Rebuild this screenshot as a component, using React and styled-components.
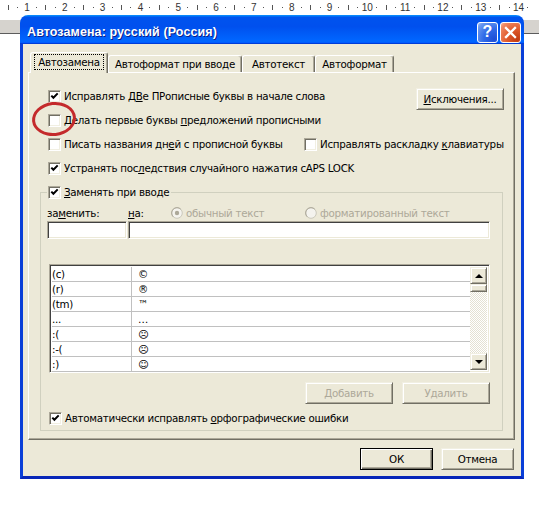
import React from 'react'
import styled, { createGlobalStyle, css } from 'styled-components'

const UI = '"DejaVu Sans", Tahoma, sans-serif'

const GlobalStyle = createGlobalStyle`
  html, body {
    margin: 0;
    padding: 0;
    background: #fff;
  }
  body {
    font-family: ${UI};
    font-size: 10.3px;
    letter-spacing: -0.28px;
    color: #000;
  }
`

const marks = []
for (let k = -2; k <= 53; k++) {
  const m = ((k % 4) + 4) % 4
  if (m === 0) marks.push({ kind: 'num', label: k / 4 + 1 })
  else if (m === 2) marks.push({ kind: 'tick' })
  else marks.push({ kind: 'dot' })
}

const rows = [
  ['(c)', '©'],
  ['(r)', '®'],
  ['(tm)', '™'],
  ['...', '…'],
  [':(', '☹'],
  [':-(', '☹'],
  [':)', '☺'],
]

const Check = ({ checked, children, width }) => (
  <CheckItem $w={width}>
    <Box>
      {checked && (
        <svg width="9" height="9" viewBox="0 0 9 9">
          <path d="M1.3 3.6 L3.4 5.8 L7.7 1.4" fill="none" stroke="#000" strokeWidth="2" />
        </svg>
      )}
    </Box>
    <span>{children}</span>
  </CheckItem>
)

const Radio = ({ on, children }) => (
  <RadioItem>
    <svg width="12" height="12" viewBox="0 0 12 12">
      <circle cx="6" cy="6" r="5.3" fill="#f4f3ee" stroke="#cac8bb" />
      <path d="M2.2 9.8 A5.3 5.3 0 0 1 9.8 2.2" fill="none" stroke="#aca899" />
      {on && <circle cx="6" cy="6" r="2.2" fill="#aca899" />}
    </svg>
    <span>{children}</span>
  </RadioItem>
)

export default function App() {
  return (
    <Page>
      <GlobalStyle />
      <Ruler>
        {marks.map((m, i) => (
          <RulerCell key={i}>
            {m.kind === 'num' ? m.label : <Mark $kind={m.kind} />}
          </RulerCell>
        ))}
      </Ruler>
      <Band />

      <Window>
        <TitleBar>
          <Title>Автозамена: русский (Россия)</Title>
          <CaptionButtons>
            <CaptionButton $kind="help">?</CaptionButton>
            <CaptionButton $kind="close">
              <svg width="13" height="13" viewBox="0 0 13 13">
                <path d="M2 2 L11 11 M11 2 L2 11" stroke="#fff" strokeWidth="2.3" strokeLinecap="square" />
              </svg>
            </CaptionButton>
          </CaptionButtons>
        </TitleBar>

        <Frame>
          <TabStrip>
            <Tab $active $w={78}>
              <FocusLabel>Автозамена</FocusLabel>
            </Tab>
            <Tab $w={134}>Автоформат при вводе</Tab>
            <Tab $w={73}>Автотекст</Tab>
            <Tab $w={79}>Автоформат</Tab>
          </TabStrip>

          <Panel>
            <Options>
              <OptionRow>
                <Check checked>
                  Исправлять Д<u>В</u>е ПРописные буквы в начале слова
                </Check>
                <Button $w={88} $top={4}>
                  <u>И</u>сключения...
                </Button>
              </OptionRow>
              <OptionRow>
                <Check>
                  Делать первые буквы <u>п</u>редложений прописными
                </Check>
                <Ellipse />
              </OptionRow>
              <OptionRow>
                <Check width={256}>
                  Писать названия дн<u>е</u>й с прописной буквы
                </Check>
                <Check>
                  Исправлять раскладку <u>к</u>лавиатуры
                </Check>
              </OptionRow>
              <OptionRow>
                <Check checked>
                  Устранять пос<u>л</u>едствия случайного нажатия cAPS LOCK
                </Check>
              </OptionRow>
            </Options>

            <Group>
              <Legend>
                <Check checked>
                  <u>З</u>аменять при вводе
                </Check>
              </Legend>
              <FieldLabels>
                <span>
                  за<u>м</u>енить:
                </span>
                <span>
                  <u>н</u>а:
                </span>
                <Radio on>обычный текст</Radio>
                <Radio>форматированный текст</Radio>
              </FieldLabels>
              <Inputs>
                <TextBox />
                <TextBox />
              </Inputs>

              <List>
                <ListBody>
                  {rows.map(([from, to]) => (
                    <ListRow key={from}>
                      <Cell>{from}</Cell>
                      <Cell $second>{to}</Cell>
                    </ListRow>
                  ))}
                </ListBody>
                <ScrollBar>
                  <ScrollButton>
                    <Arrow $dir="up" />
                  </ScrollButton>
                  <Thumb />
                  <Track />
                  <ScrollButton>
                    <Arrow $dir="down" />
                  </ScrollButton>
                </ScrollBar>
              </List>

              <ButtonRow>
                <Button $w={88} disabled>
                  Добавить
                </Button>
                <Button $w={88} disabled>
                  Удалить
                </Button>
              </ButtonRow>

              <SpellRow>
                <Check checked>
                  Автоматически исправлять <u>о</u>рфографические ошибки
                </Check>
              </SpellRow>
            </Group>
          </Panel>

          <Footer>
            <Button $w={73} $default>
              ОК
            </Button>
            <Button $w={73}>Отмена</Button>
          </Footer>
        </Frame>
      </Window>
    </Page>
  )
}

const Page = styled.div`
  position: relative;
  width: 539px;
  height: 507px;
  overflow: hidden;
  background: #fff;
`

const Ruler = styled.div`
  display: flex;
  align-items: center;
  height: 14px;
  padding-left: 3.35px;
  font-family: 'Liberation Sans', Arial, sans-serif;
  font-size: 10px;
  letter-spacing: 0;
  color: #333;
`

const RulerCell = styled.div`
  flex: none;
  width: 9.46px;
  display: flex;
  justify-content: center;
  align-items: center;
  height: 14px;
`

const Mark = styled.span`
  display: block;
  width: 1px;
  background: #555;
  height: ${(p) => (p.$kind === 'tick' ? '5px' : '1px')};
`

const Band = styled.div`
  margin-top: 6px;
  height: 13px;
  background: #d6d3ce;
  border-bottom: 1px solid #5c5c5c;
`

const Window = styled.div`
  position: absolute;
  left: 20px;
  top: 15px;
  width: 504px;
`

const TitleBar = styled.div`
  box-sizing: border-box;
  height: 29px;
  display: flex;
  align-items: center;
  justify-content: space-between;
  padding: 6px 3px 1px 7px;
  border-radius: 8px 8px 0 0;
  background: linear-gradient(
    180deg,
    #0997ff,
    #0053ee 8%,
    #0050ee 40%,
    #06f 88%,
    #06f 93%,
    #005bff 95%,
    #003dd7 96%,
    #003dd7
  );
`

const Title = styled.div`
  font-family: 'Liberation Sans', Arial, sans-serif;
  font-weight: bold;
  font-size: 12.5px;
  color: #fff;
  text-shadow: 1px 1px 0 #0a1f8a;
  letter-spacing: 0.1px;
`

const CaptionButtons = styled.div`
  display: flex;
  gap: 2px;
`

const CaptionButton = styled.div`
  box-sizing: border-box;
  width: 21px;
  height: 21px;
  border: 1px solid #fff;
  border-radius: 3px;
  display: flex;
  align-items: center;
  justify-content: center;
  color: #fff;
  font-family: 'Liberation Sans', Arial, sans-serif;
  font-weight: bold;
  font-size: 16px;
  letter-spacing: 0;
  ${(p) =>
    p.$kind === 'help'
      ? css`
          background: radial-gradient(circle at 85% 85%, #1d4dd6 0%, #2f6ae8 45%, #6a98f0 85%, #a9c4f6 100%);
        `
      : css`
          background: radial-gradient(circle at 85% 85%, #c13b12 0%, #e05a2c 45%, #ef8a66 85%, #f7b89e 100%);
        `}
`

const Frame = styled.div`
  background: #ece9d8;
  border: 3px solid #0a3fd8;
  border-top: none;
  border-bottom-color: #0726b8;
  padding: 8px 6px 6px 5px;
`

const TabStrip = styled.div`
  display: flex;
  align-items: flex-end;
  height: 20px;
  padding-left: 2px;
`

const Tab = styled.div`
  box-sizing: border-box;
  flex: none;
  width: ${(p) => p.$w}px;
  height: ${(p) => (p.$active ? 21 : 17)}px;
  margin-bottom: ${(p) => (p.$active ? -1 : 0)}px;
  position: relative;
  z-index: ${(p) => (p.$active ? 1 : 0)};
  display: flex;
  align-items: center;
  justify-content: center;
  background: #ece9d8;
  border-top: 1px solid #fff;
  border-left: 1px solid #fff;
  border-right: 1px solid #716f64;
  border-radius: 3px 3px 0 0;
  box-shadow: inset -1px 0 0 #aca899;
  padding-bottom: ${(p) => (p.$active ? 2 : 0)}px;
`

const FocusLabel = styled.span`
  border: 1px dotted #000;
  padding: 1px 3px 0;
  line-height: 13px;
`

const Panel = styled.div`
  border: 1px solid;
  border-color: #fff #716f64 #716f64 #fff;
  box-shadow: inset -1px -1px 0 #aca899;
  padding: 11px 10px 8px 11px;
`

const Options = styled.div`
  padding-left: 8px;
`

const OptionRow = styled.div`
  position: relative;
  display: flex;
  align-items: center;
  justify-content: flex-start;
  height: 24px;

  & > button {
    margin-left: auto;
    align-self: flex-start;
  }
`

const CheckItem = styled.label`
  display: inline-flex;
  align-items: center;
  gap: 3px;
  flex: none;
  width: ${(p) => (p.$w ? `${p.$w}px` : 'auto')};
  white-space: nowrap;
  line-height: 13px;
`

const Box = styled.span`
  box-sizing: border-box;
  flex: none;
  width: 13px;
  height: 13px;
  display: inline-flex;
  align-items: center;
  justify-content: center;
  background: #fff;
  border: 1px solid;
  border-color: #aca899 #fff #fff #aca899;
  box-shadow: inset 1px 1px 0 #716f64, inset -1px -1px 0 #f1efe2;
`

const Ellipse = styled.span`
  position: absolute;
  z-index: 2;
  box-sizing: border-box;
  left: -16px;
  top: -6px;
  width: 44px;
  height: 34px;
  border: 3.5px solid #c42a2c;
  border-radius: 50%;
  transform: rotate(-6deg);
  pointer-events: none;
`

const Group = styled.fieldset`
  margin: 6px 1px 0 0;
  padding: 0 12px 4px 6px;
  border: 1px solid #d0d0bf;
  min-width: 0;
`

const Legend = styled.legend`
  padding: 0 2px 0 1px;
  height: 13px;
  display: flex;
  align-items: center;
`

const FieldLabels = styled.div`
  display: grid;
  grid-template-columns: 81px 43px 134px auto;
  align-items: center;
  height: 14px;
  margin-top: 7px;
  line-height: 13px;
`

const RadioItem = styled.span`
  display: inline-flex;
  align-items: center;
  gap: 3px;
  color: #aca899;
  white-space: nowrap;
`

const Inputs = styled.div`
  display: grid;
  grid-template-columns: 80px 1fr;
  gap: 1px;
  margin-top: 1px;
`

const sunken = css`
  border: 1px solid;
  border-color: #aca899 #fff #fff #aca899;
  box-shadow: inset 1px 1px 0 #404040, inset -1px -1px 0 #ece9d8;
`

const TextBox = styled.div`
  box-sizing: border-box;
  height: 18px;
  background: #fff;
  ${sunken}
`

const List = styled.div`
  display: flex;
  margin: 25px 0 0 2px;
  height: 109px;
  box-sizing: border-box;
  padding: 2px;
  background: #fff;
  ${sunken}
`

const ListBody = styled.div`
  flex: 1;
`

const ListRow = styled.div`
  box-sizing: border-box;
  display: grid;
  grid-template-columns: 79px 1fr;
  height: 15px;
  border-bottom: 1px solid #c0c0c0;
`

const Cell = styled.div`
  line-height: 14px;
  padding-left: ${(p) => (p.$second ? 6 : 0)}px;
  border-left: ${(p) => (p.$second ? '1px solid #c0c0c0' : 'none')};
  white-space: nowrap;
`

const ScrollBar = styled.div`
  flex: none;
  width: 17px;
  display: flex;
  flex-direction: column;
`

const raised = css`
  background: #ece9d8;
  border: 1px solid;
  border-color: #f1efe2 #716f64 #716f64 #f1efe2;
  box-shadow: inset 1px 1px 0 #fff, inset -1px -1px 0 #aca899;
`

const ScrollButton = styled.div`
  box-sizing: border-box;
  height: 17px;
  display: flex;
  align-items: center;
  justify-content: center;
  ${raised}
`

const Arrow = styled.span`
  width: 0;
  height: 0;
  border-left: 4px solid transparent;
  border-right: 4px solid transparent;
  ${(p) =>
    p.$dir === 'up'
      ? css`
          border-bottom: 4px solid #000;
        `
      : css`
          border-top: 4px solid #000;
        `}
`

const Thumb = styled.div`
  box-sizing: border-box;
  height: 8px;
  ${raised}
`

const Track = styled.div`
  flex: 1;
  background: repeating-conic-gradient(#fff 0 25%, #e4e1d2 0 50%) 0 0 / 2px 2px;
`

const Button = styled.button`
  box-sizing: border-box;
  flex: none;
  width: ${(p) => p.$w}px;
  height: 22px;
  margin-top: ${(p) => p.$top || 0}px;
  padding: 0;
  font: inherit;
  letter-spacing: inherit;
  color: ${(p) => (p.disabled ? '#aca899' : '#000')};
  ${(p) =>
    p.$default
      ? css`
          background: #ece9d8;
          border: 1px solid #000;
          box-shadow: inset 1px 1px 0 #fff, inset -1px -1px 0 #716f64, inset -2px -2px 0 #aca899;
        `
      : raised}
`

const ButtonRow = styled.div`
  display: flex;
  justify-content: flex-end;
  gap: 9px;
  margin-top: 9px;
`

const SpellRow = styled.div`
  display: flex;
  align-items: center;
  height: 16px;
  margin: 6px 0 0 2px;
`

const Footer = styled.div`
  display: flex;
  justify-content: flex-end;
  gap: 8px;
  margin-top: 8px;
  padding-right: 1px;
`
